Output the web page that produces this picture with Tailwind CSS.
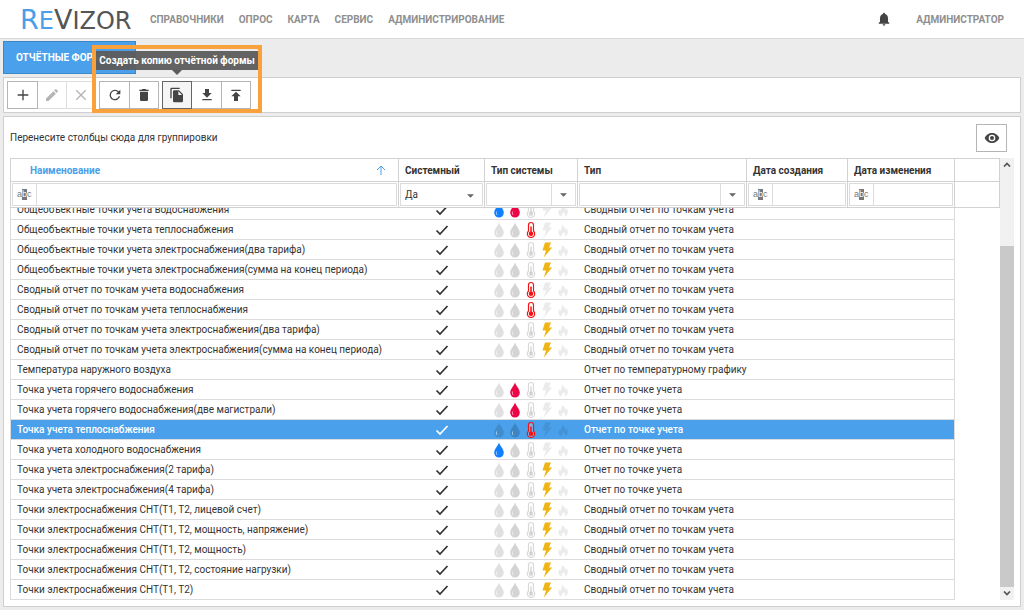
<!DOCTYPE html>
<html lang="ru">
<head>
<meta charset="utf-8">
<title>ReVizor</title>
<script src="https://cdn.jsdelivr.net/npm/@tailwindcss/browser@4"></script>
</head>
<body class="flex h-screen flex-col overflow-hidden bg-[#ececec] font-[Roboto,sans-serif] text-[10px] text-[#333]">

<svg class="hidden" aria-hidden="true">
  <symbol id="check" viewBox="0 0 14 12"><path d="M1.500 6.500 5 10 12.500 2" fill="none" stroke="currentColor" stroke-width="1.700"/></symbol>
  <symbol id="drop" viewBox="0 0 12 18"><path d="M6 1.500C5 5 1.200 8 1.200 11.800a4.800 4.800 0 0 0 9.600 0C10.800 8 7 5 6 1.500Z" fill="currentColor"/><path d="M3.600 10.500c-.4 1.500-.1 2.700.6 3.500" fill="none" stroke="#fff" stroke-opacity=".6" stroke-width="1"/></symbol>
  <symbol id="thermo" viewBox="0 0 12 18"><path d="M3.500 10V4a2.500 2.500 0 0 1 5 0v6a3.700 3.700 0 1 1-5 0Z" fill="#fff" fill-opacity=".25" stroke="currentColor" stroke-width="1.200"/><path d="M6 5.500v6" stroke="currentColor" stroke-width="1.500"/><circle cx="6" cy="12.800" r="2.300" fill="currentColor"/></symbol>
  <symbol id="bolt" viewBox="0 0 12 18"><path d="M4 1.500h6L8 6.500h3.200L2.800 16.500 5 9.500H1.500Z" fill="currentColor"/></symbol>
  <symbol id="flame" viewBox="0 0 12 18"><path d="M5.500 3c.6 2.500 3 3.500 3.200 5.500.6-.3.800-.8.900-1.500 1 1.800 1.600 3.500 1.200 5.200-.4 1.600-1.500 2.800-3 3.300.8-1.500.2-3.200-1.300-4.500-.2 1.500-2.300 2.500-1.700 4.500C2.500 15 1.300 13.600 1.300 11.700c0-1.500.8-2.500 1.500-3.400.2.800.4 1.200.9 1.500C3.500 7.500 5.800 6 5.500 3Z" fill="currentColor"/></symbol>
  <symbol id="abc" viewBox="0 0 16 12"><rect x="5" y="0" width="5" height="11" fill="#777"/><text x="0" y="8" font-family="Liberation Sans, sans-serif" font-size="9" fill="#777">a</text><text x="5" y="8" font-family="Liberation Sans, sans-serif" font-size="9" fill="#fff">b</text><text x="10" y="8" font-family="Liberation Sans, sans-serif" font-size="9" fill="#777">c</text></symbol>
  <symbol id="caret" viewBox="0 0 8 4"><path d="M0 0h8L4 4Z" fill="#666"/></symbol>
</svg>

<header class="flex h-[39px] shrink-0 items-center border-b border-[#d8d8d8] bg-white pr-5 pl-5 font-bold text-[#8f8f8f]">
  <a href="#" class="w-[130px] font-['DejaVu_Sans',sans-serif] text-[24px] leading-none font-normal text-[#555]" aria-label="ReVizor"><span class="text-[#4a9fe8]"><span class="text-[27px]">R</span>E</span><span class="text-[27px]">V</span>IZOR</a>
  <nav class="flex gap-[15px]">
    <a href="#">СПРАВОЧНИКИ</a><a href="#">ОПРОС</a><a href="#">КАРТА</a><a href="#">СЕРВИС</a><a href="#">АДМИНИСТРИРОВАНИЕ</a>
  </nav>
  <div class="ml-auto flex items-center gap-6">
    <button aria-label="Уведомления"><svg class="size-4 text-[#444]" viewBox="0 0 24 24" fill="currentColor"><path d="M12 22c1.100 0 2-.9 2-2h-4c0 1.100.9 2 2 2Zm6-6v-5c0-3.070-1.640-5.640-4.500-6.320V4a1.500 1.500 0 0 0-3 0v.68C7.630 5.360 6 7.920 6 11v5l-2 2v1h16v-1Z"/></svg></button>
    <a href="#">АДМИНИСТРАТОР</a>
  </div>
</header>

<main class="flex min-h-0 flex-1 flex-col px-[3px] pt-0.5 pb-[3px]">
  <div role="tablist" class="flex">
    <button role="tab" aria-selected="true" class="flex h-[33px] w-[133px] items-center justify-between border border-[#3c87c8] bg-[#4aa0ea] pr-2 pl-3 font-bold whitespace-nowrap text-white">ОТЧЁТНЫЕ ФОРМЫ <svg class="size-2" viewBox="0 0 8 8" stroke="currentColor"><path d="m1 1 6 6M7 1 1 7"/></svg></button>
  </div>

  <div class="relative mt-[3px] flex h-9 shrink-0 items-center gap-[3px] border border-[#cfcfcf] bg-white px-[3px] text-[#444]">
    <div class="flex h-7">
      <button aria-label="Добавить" class="grid w-[31px] place-items-center border border-[#b5b5b5]"><svg class="size-4" viewBox="0 0 24 24" fill="currentColor"><path d="M20 13h-7v7h-2v-7H4v-2h7V4h2v7h7Z"/></svg></button>
      <button aria-label="Изменить" disabled class="grid w-[29px] place-items-center border-y border-r border-[#dedede] text-[#b5b5b5]"><svg class="size-4" viewBox="0 0 24 24" fill="currentColor"><path d="M3 17.250V21h3.750L17.810 9.940l-3.750-3.750ZM20.710 7.040a1 1 0 0 0 0-1.410l-2.340-2.340a1 1 0 0 0-1.410 0l-1.830 1.830 3.750 3.750Z"/></svg></button>
      <button aria-label="Удалить" disabled class="grid w-[29px] place-items-center border-y border-r border-[#dedede] text-[#b5b5b5]"><svg class="size-4" viewBox="0 0 24 24" fill="none" stroke="currentColor" stroke-width="2"><path d="m5 5 14 14M19 5 5 19"/></svg></button>
    </div>
    <div class="flex h-7">
      <button aria-label="Обновить" class="grid w-[31px] place-items-center border border-[#b5b5b5]"><svg class="size-4" viewBox="0 0 24 24" fill="currentColor"><path d="M17.650 6.350A8 8 0 1 0 19.730 14h-2.080A6 6 0 1 1 12 6c1.660 0 3.140.69 4.220 1.780L13 11h7V4Z"/></svg></button>
      <button aria-label="Корзина" class="grid w-[29px] place-items-center border-y border-r border-[#b5b5b5]"><svg class="size-4" viewBox="0 0 24 24" fill="currentColor"><path d="M6 19c0 1.100.9 2 2 2h8c1.100 0 2-.9 2-2V7H6ZM19 4h-3.500l-1-1h-5l-1 1H5v2h14Z"/></svg></button>
    </div>
    <div class="flex h-7">
      <button aria-label="Создать копию отчётной формы" class="grid w-[30px] place-items-center border border-[#666] bg-[#f5f5f5]"><svg class="size-4" viewBox="0 0 24 24" fill="currentColor"><path d="M16 1H4a2 2 0 0 0-2 2v14h2V3h12Zm-1 4 6 6v10a2 2 0 0 1-2 2H8a2 2 0 0 1-2-2V7c0-1.100.9-2 2-2Zm-1 7h5.500L14 6.500Z"/></svg></button>
      <button aria-label="Скачать" class="grid w-[30px] place-items-center border-y border-r border-[#b5b5b5]"><svg class="size-4" viewBox="0 0 24 24" fill="currentColor"><path d="M19 9h-4V3H9v6H5l7 7ZM5 18v2h14v-2Z"/></svg></button>
      <button aria-label="Загрузить" class="grid w-[29px] place-items-center border-y border-r border-[#b5b5b5]"><svg class="size-4" viewBox="0 0 24 24" fill="currentColor"><path d="M5 4v2h14V4Zm0 10h4v7h6v-7h4l-7-7Z"/></svg></button>
    </div>
    <div class="pointer-events-none absolute -top-[33px] left-[88px] h-[68px] w-[170px] border-4 border-[#f9a13c]">
      <div role="tooltip" class="absolute top-0.5 left-0 grid h-[19px] w-[162px] place-items-center bg-[#5c5c5c]/95 font-bold whitespace-nowrap text-white">Создать копию отчётной формы
        <svg class="absolute top-full left-[76px] h-[5px] w-2.5 text-[#5c5c5c]" viewBox="0 0 10 5"><path d="M0 0h10L5 5Z" fill="currentColor"/></svg>
      </div>
    </div>
  </div>

  <section class="mt-[3px] flex min-h-0 flex-1 flex-col border border-[#cfcfcf] bg-white px-1.5 pb-1.5">
    <div class="flex h-[41px] shrink-0 items-center justify-between pr-[7px]">
      <p>Перенесите столбцы сюда для группировки</p>
      <button aria-label="Выбор столбцов" class="grid h-7 w-[31px] place-items-center border border-[#b5b5b5] text-[#444]"><svg class="size-4" viewBox="0 0 24 24" fill="currentColor"><path fill-rule="evenodd" d="M12 4.500C7 4.500 2.730 7.610 1 12c1.730 4.390 6 7.500 11 7.500s9.270-3.110 11-7.500c-1.730-4.390-6-7.500-11-7.500ZM12 17a5 5 0 1 1 0-10 5 5 0 0 1 0 10Zm0-8a3 3 0 1 0 0 6 3 3 0 0 0 0-6Z"/></svg></button>
    </div>

    <div class="flex min-h-0 flex-1">
      <div class="flex min-w-0 flex-1 flex-col">
        <table class="w-full shrink-0 table-fixed border-collapse text-left">
          <colgroup><col><col class="w-[86px]"><col class="w-[93px]"><col class="w-[169px]"><col class="w-[101px]"><col class="w-[107px]"><col class="w-[45px]"></colgroup>
          <thead>
            <tr class="h-[23px] *:border *:border-[#d2d2d2] *:p-0 *:font-bold">
              <th aria-sort="ascending"><div class="flex items-center justify-between pr-3 pl-[19px] text-[#4aa0ea]">Наименование <svg class="size-2.5" viewBox="0 0 10 10" fill="none" stroke="currentColor"><path d="M5 10V1M1 5l4-4 4 4"/></svg></div></th>
              <th><div class="pl-1.5">Системный</div></th><th><div class="pl-1.5">Тип системы</div></th><th><div class="pl-1.5">Тип</div></th><th><div class="pl-1.5">Дата создания</div></th><th><div class="pl-1.5">Дата изменения</div></th><td></td>
            </tr>
            <tr class="h-[26px] *:border *:border-[#d2d2d2] *:p-px">
              <td><div class="flex h-[23px] border border-[#dcdcdc]"><button aria-label="Условие: наименование" class="grid w-6 shrink-0 place-items-center border-r border-[#dcdcdc]"><svg class="h-3 w-4"><use href="#abc"/></svg></button><input aria-label="Фильтр: наименование" class="min-w-0 flex-1 px-1"></div></td>
              <td><div class="relative h-[23px] border border-[#dcdcdc]"><select aria-label="Фильтр: системный" class="h-full w-full appearance-none pl-1"><option>Да</option><option>Нет</option></select><svg class="pointer-events-none absolute top-2.5 right-2 h-1 w-[7px]"><use href="#caret"/></svg></div></td>
              <td><div class="flex h-[23px] border border-[#dcdcdc]"><input aria-label="Фильтр: тип системы" class="min-w-0 flex-1 px-1"><button aria-label="Открыть список типов системы" class="grid w-6 shrink-0 place-items-center border-l border-[#dcdcdc]"><svg class="h-1 w-[7px]"><use href="#caret"/></svg></button></div></td>
              <td><div class="flex h-[23px] border border-[#dcdcdc]"><input aria-label="Фильтр: тип" class="min-w-0 flex-1 px-1"><button aria-label="Открыть список типов" class="grid w-6 shrink-0 place-items-center border-l border-[#dcdcdc]"><svg class="h-1 w-[7px]"><use href="#caret"/></svg></button></div></td>
              <td><div class="flex h-[23px] border border-[#dcdcdc]"><button aria-label="Условие: дата создания" class="grid w-6 shrink-0 place-items-center border-r border-[#dcdcdc]"><svg class="h-3 w-4"><use href="#abc"/></svg></button><input aria-label="Фильтр: дата создания" class="min-w-0 flex-1 px-1"></div></td>
              <td><div class="flex h-[23px] border border-[#dcdcdc]"><button aria-label="Условие: дата изменения" class="grid w-6 shrink-0 place-items-center border-r border-[#dcdcdc]"><svg class="h-3 w-4"><use href="#abc"/></svg></button><input aria-label="Фильтр: дата изменения" class="min-w-0 flex-1 px-1"></div></td>
              <td></td>
            </tr>
          </thead>
        </table>
        <div class="mr-[45px] flex min-h-0 flex-1 flex-col justify-end overflow-hidden border-x border-[#dcdcdc]">
          <table class="w-full shrink-0 table-fixed border-separate border-spacing-0">
            <colgroup><col><col class="w-[86px]"><col class="w-[93px]"><col class="w-[376px]"></colgroup>
            <tbody id="rows"></tbody>
          </table>
        </div>
      </div>
      <div class="flex w-3.5 shrink-0 flex-col bg-[#f1f1f1] text-[#555]">
        <button aria-label="Прокрутить вверх" class="grid h-[13px] place-items-center"><svg class="h-[5px] w-2" viewBox="0 0 8 5" fill="none" stroke="currentColor" stroke-width="1.700"><path d="m1 4.500 3-3 3 3"/></svg></button>
        <div class="flex min-h-0 flex-1 flex-col"><div class="h-[18%] shrink-0"></div><div class="flex-1 bg-[#c9c9c9]"></div></div>
        <button aria-label="Прокрутить вниз" class="grid h-[13px] place-items-center"><svg class="h-[5px] w-2" viewBox="0 0 8 5" fill="none" stroke="currentColor" stroke-width="1.700"><path d="m1 .5 3 3 3-3"/></svg></button>
      </div>
    </div>
  </section>
</main>

<script>
const S = 'Сводный отчет по точкам учета', P = 'Отчет по точке учета';
// Name, active systems (c cold water, h hot water, t heat, e electricity), type
const data = [
  ['Общеобъектные точки учета водоснабжения', 'ch', S],
  ['Общеобъектные точки учета теплоснабжения', 't', S],
  ['Общеобъектные точки учета электроснабжения(два тарифа)', 'e', S],
  ['Общеобъектные точки учета электроснабжения(сумма на конец периода)', 'e', S],
  ['Сводный отчет по точкам учета водоснабжения', 't', S],
  ['Сводный отчет по точкам учета теплоснабжения', 't', S],
  ['Сводный отчет по точкам учета электроснабжения(два тарифа)', 'e', S],
  ['Сводный отчет по точкам учета электроснабжения(сумма на конец периода)', 'e', S],
  ['Температура наружного воздуха', '', 'Отчет по температурному графику'],
  ['Точка учета горячего водоснабжения', 'h', P],
  ['Точка учета горячего водоснабжения(две магистрали)', 'h', P],
  ['Точка учета теплоснабжения', 't', P],
  ['Точка учета холодного водоснабжения', 'c', P],
  ['Точка учета электроснабжения(2 тарифа)', 'e', P],
  ['Точка учета электроснабжения(4 тарифа)', 'e', P],
  ['Точки электроснабжения СНТ(Т1, Т2, лицевой счет)', 'e', S],
  ['Точки электроснабжения СНТ(Т1, Т2, мощность, напряжение)', 'e', S],
  ['Точки электроснабжения СНТ(Т1, Т2, мощность)', 'e', S],
  ['Точки электроснабжения СНТ(Т1, Т2, состояние нагрузки)', 'e', S],
  ['Точки электроснабжения СНТ(Т1, Т2)', 'e', S],
];
const kinds = [
  ['c', 'drop', 'text-[#127fff]', 'text-black/12'],
  ['h', 'drop', 'text-[#ec0545]', 'text-black/17'],
  ['t', 'thermo', 'text-[#f01515]', 'text-black/15'],
  ['e', 'bolt', 'text-[#efb416]', 'text-black/8'],
  ['g', 'flame', 'text-[#f60]', 'text-black/8'],
];
const selected = 11;
document.getElementById('rows').innerHTML = data.map(([name, on, type], i) => {
  const icons = on ? kinds.map(([k, id, lit, dim]) =>
    `<svg class="h-[18px] w-3 ${on.includes(k) ? lit : dim}"><use href="#${id}"/></svg>`).join('') : '';
  const row = i === selected ? 'bg-[#4aa0ea] font-medium text-white' : '';
  return `<tr class="h-5 whitespace-nowrap *:border-b *:border-[#dcdcdc] *:p-0 ${row}">
    <td><div class="pl-1.5">${name}</div></td>
    <td><svg class="mx-auto h-3 w-3.5" role="img" aria-label="Да"><use href="#check"/></svg></td>
    <td><div class="flex gap-1 pl-2">${icons}</div></td>
    <td><div class="pl-1.5">${type}</div></td></tr>`;
}).join('');
</script>
</body>
</html>
